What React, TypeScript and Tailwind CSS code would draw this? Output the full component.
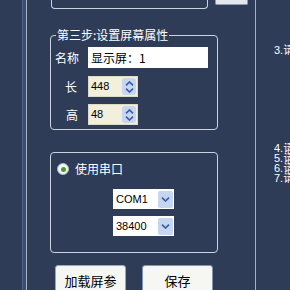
import React from "react";

const Chevron = ({ up }: { up?: boolean }) => (
  <svg width="9" height="5" viewBox="0 0 9 5">
    <path
      d={up ? "M1 4.3 L4.5 1 L8 4.3" : "M1 0.7 L4.5 4 L8 0.7"}
      stroke="#3b5fa6"
      strokeWidth="1.7"
      fill="none"
    />
  </svg>
);

function Spin({ value }: { value: string }) {
  return (
    <div className="flex items-center w-[50px] h-[21px] bg-[#f2efdc] border border-[#dedac6]">
      <span className="flex-1 pl-[2px] text-[11px] leading-none text-black font-['Liberation_Sans',sans-serif]">
        {value}
      </span>
      <div className="w-[14px] h-[17px] mr-[1px] rounded-[3px] bg-[#c8d6f0] flex flex-col items-center justify-center gap-[2px]">
        <Chevron up />
        <Chevron />
      </div>
    </div>
  );
}

function Combo({ value }: { value: string }) {
  return (
    <div className="flex items-center w-[61px] h-[20px] bg-white">
      <span className="flex-1 pl-[3px] text-[11px] leading-none text-black font-['Liberation_Sans',sans-serif]">
        {value}
      </span>
      <div className="w-[15px] h-[17px] mr-[1px] rounded-[2px] bg-[#c6d5f0] flex items-center justify-center">
        <Chevron />
      </div>
    </div>
  );
}

export default function App() {
  return (
    <div className="w-[290px] h-[290px] overflow-hidden bg-[#2e3c58] flex font-['Noto_Sans_CJK_SC',sans-serif] text-white">
      <div className="w-[22px] shrink-0" />
      <div className="w-px shrink-0 bg-[#50658e]" />
      <div className="w-[3px] shrink-0 bg-[#394c72]" />
      <div className="w-px shrink-0 bg-[#a9b4c7]" />

      <div className="w-[228px] shrink-0 flex flex-col">
        <div className="flex h-[9px] items-start">
          <div className="ml-[24px] w-[157px] h-[9px] border-x border-b border-[#cdd3de] rounded-b-[4px]" />
          <div className="ml-[7px] w-[33px] h-[5px] bg-[#e3e7ee] border-x border-b border-[#8d9cb6] rounded-b-[2px]" />
        </div>

        <fieldset className="ml-[23px] mt-[18px] w-[168px] border border-[#cdd3de] rounded-[4px] pb-[4px]">
          <legend className="ml-[5px] px-[1px] text-[12px] leading-[16px] text-white">
            第三步:设置屏幕属性
          </legend>
          <div className="flex items-center mt-[4px] h-[21px]">
            <span className="w-[37px] pl-[4px] text-[12px] leading-none">名称</span>
            <div className="w-[120px] h-[21px] bg-white flex items-center pl-[3px] text-[12px] leading-none text-black">
              显示屏：1
            </div>
          </div>
          <div className="flex items-center mt-[8px]">
            <span className="w-[37px] pl-[14px] text-[12px] leading-none">长</span>
            <Spin value="448" />
          </div>
          <div className="flex items-center mt-[7px]">
            <span className="w-[37px] pl-[15px] text-[12px] leading-none">高</span>
            <Spin value="48" />
          </div>
        </fieldset>

        <div className="ml-[23px] mt-[22px] w-[168px] border border-[#cdd3de] rounded-[4px] pb-[16px]">
          <div className="flex items-center mt-[9px] h-[14px] ml-[6px] gap-[6px]">
            <div className="w-[12px] h-[12px] rounded-full bg-[#f4f6f8] border border-[#aeb9c9] flex items-center justify-center">
              <div className="w-[5px] h-[5px] rounded-full bg-[#4f9a2e]" />
            </div>
            <span className="text-[12px] leading-none">使用串口</span>
          </div>
          <div className="ml-[62px] mt-[13px]">
            <Combo value="COM1" />
          </div>
          <div className="ml-[62px] mt-[7px]">
            <Combo value="38400" />
          </div>
        </div>

        <div className="flex mt-[12px] ml-[28px] gap-[16px]">
          <div className="w-[71px] h-[32px] bg-[#f6f6f2] border border-[#9aa7bd] rounded-[3px] flex items-start justify-center pt-[8px] text-[13px] leading-none text-black">
            加载屏参
          </div>
          <div className="w-[71px] h-[32px] bg-[#f6f6f2] border border-[#8193b5] rounded-[3px] flex items-start justify-center pt-[8px] text-[13px] leading-none text-black">
            保存
          </div>
        </div>
      </div>

      <div className="w-px shrink-0 bg-[#a6b0c2]" />

      <div className="flex-1 overflow-hidden pl-[18px] whitespace-nowrap font-['Liberation_Sans','Noto_Sans_CJK_SC',sans-serif] text-[11px] text-white">
        <div className="mt-[44px] h-[12px] leading-[12px] overflow-hidden">3.请</div>
        <div className="mt-[87px]">
          <div className="h-[10px] leading-[10px] overflow-hidden">4.请</div>
          <div className="h-[10px] leading-[10px] overflow-hidden">5.请</div>
          <div className="h-[10px] leading-[10px] overflow-hidden">6.请</div>
          <div className="h-[10px] leading-[10px] overflow-hidden">7.请</div>
        </div>
      </div>
    </div>
  );
}
